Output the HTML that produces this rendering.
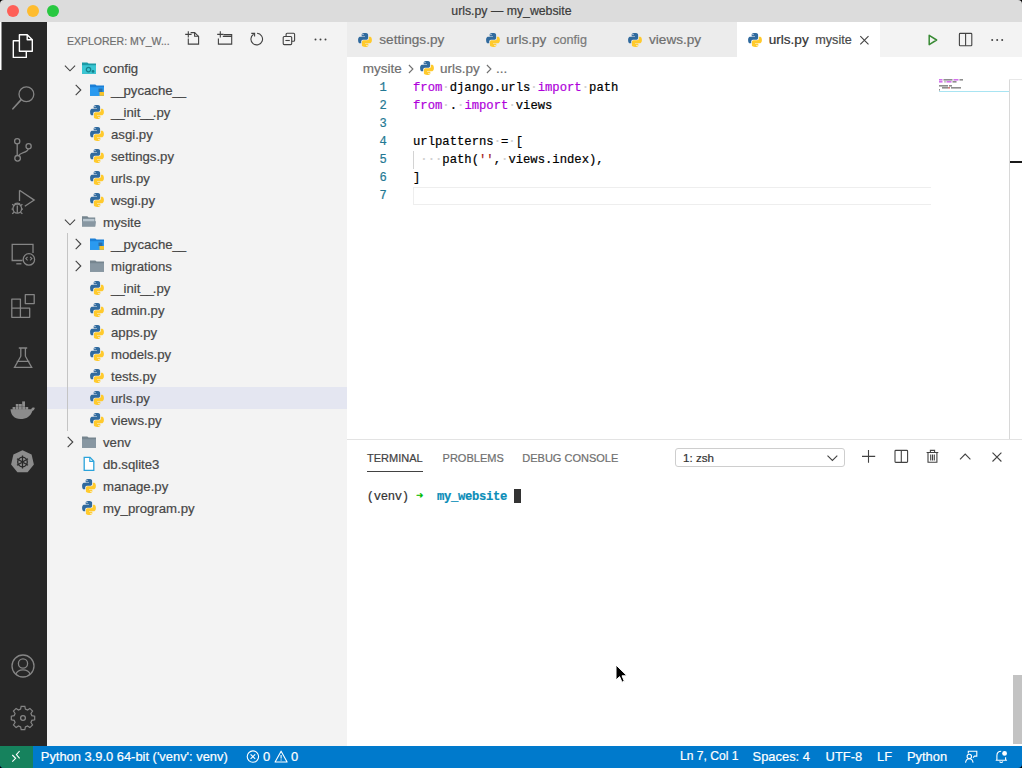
<!DOCTYPE html>
<html><head><meta charset="utf-8">
<style>
*{margin:0;padding:0;box-sizing:border-box}
html,body{width:1022px;height:768px;overflow:hidden;background:#fff;font-family:"Liberation Sans",sans-serif;}
.a{position:absolute}
.t{position:absolute;white-space:pre;-webkit-text-stroke:0.2px currentColor}
svg.a{overflow:visible}
</style></head><body>
<div class="a" style="left:0px;top:0px;width:1022px;height:22px;background:#000;"></div>
<div class="a" style="left:0px;top:0px;width:1022px;height:22px;background:#dcdcdc;border-radius:4px 4px 0 0;"></div>
<div class="a" style="left:0px;top:22px;width:47px;height:724px;background:#272727;"></div>
<div class="a" style="left:47px;top:22px;width:300px;height:724px;background:#f3f3f3;"></div>
<div class="a" style="left:347px;top:22px;width:675px;height:35px;background:#f3f3f3;"></div>
<div class="a" style="left:347px;top:22px;width:390px;height:35px;background:#ececec;"></div>
<div class="a" style="left:737px;top:22px;width:143px;height:35px;background:#ffffff;"></div>
<div class="a" style="left:347px;top:57px;width:675px;height:382px;background:#ffffff;"></div>
<div class="a" style="left:347px;top:439px;width:675px;height:307px;background:#ffffff;"></div>
<div class="a" style="left:347px;top:439px;width:675px;height:1px;background:#e3e3e3;"></div>
<div class="a" style="left:0px;top:746px;width:1022px;height:22px;background:#000;"></div>
<div class="a" style="left:0px;top:746px;width:1022px;height:22px;background:#007acc;border-radius:0 0 4px 4px;"></div>
<div class="a" style="left:0px;top:746px;width:33px;height:22px;background:#16825d;border-radius:0 0 0 4px;"></div>
<div class="a" style="left:6.9px;top:4.6px;width:12px;height:12px;border-radius:50%;background:#fe5f57;"></div>
<div class="a" style="left:26.9px;top:4.6px;width:12px;height:12px;border-radius:50%;background:#febc2e;"></div>
<div class="a" style="left:46.9px;top:4.6px;width:12px;height:12px;border-radius:50%;background:#28c840;"></div>
<div class="t" style="left:451.30px;top:2.14px;font-size:12.3px;line-height:18px;color:#3b3b3b;font-family:'Liberation Sans',sans-serif;">urls.py — my_website</div>
<svg class="a" style="left:0;top:0" width="47" height="768" viewBox="0 0 47 768">
<rect x="0" y="22" width="1.5" height="48" fill="#ffffff"/>
<g fill="none" stroke="#ffffff" stroke-width="1.4" stroke-linejoin="round">
<path d="M19.4 34.7H27.2L32.3 39.8V51.3H19.4Z"/>
<path d="M27.2 34.7V39.8H32.3"/>
<path d="M19.4 40.8H13.3V57.4H26.3V51.3"/>
</g>
<g fill="none" stroke="#858585" stroke-width="1.3">
<circle cx="26.4" cy="94.2" r="7.4"/>
<path d="M21.2 99.6L12.9 108.8" stroke-width="1.6" stroke-linecap="round"/>
<circle cx="17.2" cy="141.2" r="2.6"/>
<circle cx="28.6" cy="146.2" r="2.6"/>
<circle cx="17.6" cy="158.3" r="2.8"/>
<path d="M17.2 143.8V155.5"/>
<path d="M28.2 148.8C27.5 153 20 152.2 18.6 155.8"/>
<path d="M19.5 190.3V201M19.5 190.3L34.2 200.1L24.8 206.3"/>
<ellipse cx="17.3" cy="208.6" rx="4.3" ry="4.6"/>
<path d="M12.2 204.2L14.5 206M22.4 204.2L20.2 206M11.6 209.2H13M21.6 209.2H23M12.2 213.8L14.2 212.2M22.4 213.8L20.4 212.2M14.3 204.6C15 202.6 19.6 202.6 20.3 204.6M17.3 205.5V212.8"/>
<path d="M22.5 260.5H12.2V244.4H33V253"/>
<path d="M16.3 263.8H21.4"/>
<circle cx="28.9" cy="259.4" r="5.7"/>
<path d="M27.6 256.8L25.8 258.6L27.6 260.4M30.1 256.8L31.9 258.6L30.1 260.4" stroke-width="1.1"/>
<path d="M11.8 299.1H20.4V317.3H11.8ZM11.8 308.2H29.7V317.3H20.4M25.3 294.7H34.2V303.6H25.3Z" stroke-linejoin="round"/>
<path d="M18.8 348H27.2M20.8 348V356.2L14.5 367.4H31.7L25.4 356.2V348M16.7 361.4H29.4"/>
<circle cx="23" cy="666" r="11"/>
<circle cx="23" cy="663.5" r="4.6"/>
<path d="M15.8 674.3C18 668.5 28 668.5 30.2 674.3"/>
<circle cx="23" cy="718" r="2.4"/>
<path d="M21 707.3H25L25.6 710.4L27.9 711.4L30.5 709.6L33.4 712.5L31.6 715.1L32.6 717.4L35.7 718V722L32.6 722.6L31.6 724.9L33.4 727.5L30.5 730.4L27.9 728.6L25.6 729.6L25 732.7H21L20.4 729.6L18.1 728.6L15.5 730.4L12.6 727.5L14.4 724.9L13.4 722.6L10.3 722V718L13.4 717.4L14.4 715.1L12.6 712.5L15.5 709.6L18.1 711.4L20.4 710.4Z" transform="translate(23,718) scale(0.92) translate(-23,-720)"/>
</g>
<g fill="#8c8c8c">
<path d="M10.5 409.3H31.2C31.6 407.6 33.4 407 34.8 407.9C34.5 409.4 33.6 410.5 32.4 410.9C30.8 416 26.4 419 20.4 419C14.4 419 10.9 415.2 10.5 409.3Z"/>
<rect x="12.6" y="407" width="2.8" height="2.8"/><rect x="15.8" y="407" width="2.8" height="2.8"/><rect x="19" y="407" width="2.8" height="2.8"/><rect x="22.2" y="407" width="2.8" height="2.8"/><rect x="25.4" y="407" width="2.8" height="2.8"/>
<rect x="15.8" y="404" width="2.8" height="2.8"/><rect x="19" y="404" width="2.8" height="2.8"/><rect x="22.2" y="404" width="2.8" height="2.8"/>
<rect x="22.2" y="401.4" width="2.8" height="2.8"/>
<path d="M22.5 450.2L31.6 454.6L33.9 464.4L27.6 472.3H17.4L11.1 464.4L13.4 454.6Z"/>
</g>
<g fill="none" stroke="#272727" stroke-width="1.3">
<circle cx="22.5" cy="462" r="4.8"/>
<path d="M22.5 455.5V468.5M17 458.8L28 465.2M17 465.2L28 458.8"/>
</g>
</svg>
<div class="t" style="left:67.00px;top:32.96px;font-size:10.5px;line-height:16px;color:#6f6f6f;font-family:'Liberation Sans',sans-serif;">EXPLORER: MY_W...</div>
<svg class="a" style="left:0;top:0" width="347" height="60" viewBox="0 0 347 60">
<g fill="none" stroke="#424242" stroke-width="1.1">
<path d="M188.3 31.3V37.6M185.2 34.4H191.6"/>
<path d="M190.6 32.6H194.6L198.6 36.4V44.1H188.3V38.6"/>
<path d="M194.6 32.6V36.2H198.6"/>
<path d="M220.3 31.3V37.6M217.2 34.4H223.6"/>
<path d="M223.6 34.6H231.7V44.1H218.4V38.6M222.8 36.4H231.7"/>
<path d="M253.6 34.2A5.8 5.8 0 1 0 257.1 33.3"/>
<path d="M251.3 33.4H254.6V36.6"/>
<path d="M286.1 36.4V34.3Q286.1 33.3 287.1 33.3H293.6Q294.6 33.3 294.6 34.3V40.2Q294.6 41.2 293.6 41.2H291.7"/>
<rect x="283.2" y="36.5" width="8.5" height="8.1" rx="1"/>
<path d="M285.4 40.5H289.8"/>
</g>
<g fill="#424242"><circle cx="315.5" cy="39.5" r="1"/><circle cx="320.5" cy="39.5" r="1"/><circle cx="325.5" cy="39.5" r="1"/></g>
</svg>
<div class="a" style="left:47px;top:387px;width:300px;height:22px;background:#e4e6f1;"></div>
<div class="a" style="left:67px;top:233px;width:1px;height:198px;background:#c4c4c4;"></div>
<svg class="a" style="left:62px;top:60px" width="16" height="16" viewBox="0 0 16 16"><path d="M2.9 5.7L8 10.8l5.1-5.1" fill="none" stroke="#424242" stroke-width="1.1"/></svg>
<svg class="a" style="left:81px;top:60px" width="16" height="16" viewBox="0 0 16 16">
<path fill="#1a9aa6" d="M1 2.4H6.3L7.6 3.6H15V13.8H1Z"/>
<path fill="#3ac6d3" d="M1 5.2H15V13.8H1Z"/>
<circle cx="7.5" cy="9.6" r="2.2" fill="none" stroke="#15808c" stroke-width="1.2"/>
<circle cx="12" cy="11.4" r="1.4" fill="#15808c"/>
</svg>
<div class="t" style="left:103.00px;top:58.72px;font-size:13.2px;line-height:20px;color:#474747;font-family:'Liberation Sans',sans-serif;">config</div>
<svg class="a" style="left:70.1px;top:82px" width="16" height="16" viewBox="0 0 16 16"><path d="M5.7 2.9L10.8 8l-5.1 5.1" fill="none" stroke="#424242" stroke-width="1.1"/></svg>
<svg class="a" style="left:89px;top:82px" width="16" height="16" viewBox="0 0 16 16">
<path fill="#1b7fd6" d="M1 2.4H6.3L7.6 3.6H15V13.8H1Z"/>
<path fill="#2a9af0" d="M1 5.2H15V13.8H1Z"/>
<path fill="#2a6fa8" d="M9.5 6.5h4v3.5h-4z"/>
<path fill="#f6c22a" d="M10.5 10h4.5v3.8h-4.5z"/>
</svg>
<div class="t" style="left:111.00px;top:80.72px;font-size:13.2px;line-height:20px;color:#474747;font-family:'Liberation Sans',sans-serif;"><span style="letter-spacing:-1.1px">__</span>pycache<span style="letter-spacing:-1.1px">__</span></div>
<svg class="a" style="left:89px;top:104px" width="16" height="16" viewBox="0 0 16 16">
<path fill="#306a9e" d="M7.9 1.1c-3.4 0-3.2 1.5-3.2 1.5v1.6h3.3v.5H3.3S1.1 4.4 1.1 7.9s1.9 3.4 1.9 3.4h1.2V9.6s-.1-1.9 1.9-1.9h3.2s1.8 0 1.8-1.8V2.9s.3-1.8-3.2-1.8z"/>
<circle cx="6" cy="2.6" r=".6" fill="#fff"/>
<path fill="#ffca2c" transform="rotate(180 8 8)" d="M7.9 1.1c-3.4 0-3.2 1.5-3.2 1.5v1.6h3.3v.5H3.3S1.1 4.4 1.1 7.9s1.9 3.4 1.9 3.4h1.2V9.6s-.1-1.9 1.9-1.9h3.2s1.8 0 1.8-1.8V2.9s.3-1.8-3.2-1.8z"/>
<circle cx="10" cy="13.4" r=".6" fill="#fff"/>
</svg>
<div class="t" style="left:111.00px;top:102.72px;font-size:13.2px;line-height:20px;color:#474747;font-family:'Liberation Sans',sans-serif;"><span style="letter-spacing:-1.1px">__</span>init<span style="letter-spacing:-1.1px">__</span>.py</div>
<svg class="a" style="left:89px;top:126px" width="16" height="16" viewBox="0 0 16 16">
<path fill="#306a9e" d="M7.9 1.1c-3.4 0-3.2 1.5-3.2 1.5v1.6h3.3v.5H3.3S1.1 4.4 1.1 7.9s1.9 3.4 1.9 3.4h1.2V9.6s-.1-1.9 1.9-1.9h3.2s1.8 0 1.8-1.8V2.9s.3-1.8-3.2-1.8z"/>
<circle cx="6" cy="2.6" r=".6" fill="#fff"/>
<path fill="#ffca2c" transform="rotate(180 8 8)" d="M7.9 1.1c-3.4 0-3.2 1.5-3.2 1.5v1.6h3.3v.5H3.3S1.1 4.4 1.1 7.9s1.9 3.4 1.9 3.4h1.2V9.6s-.1-1.9 1.9-1.9h3.2s1.8 0 1.8-1.8V2.9s.3-1.8-3.2-1.8z"/>
<circle cx="10" cy="13.4" r=".6" fill="#fff"/>
</svg>
<div class="t" style="left:111.00px;top:124.72px;font-size:13.2px;line-height:20px;color:#474747;font-family:'Liberation Sans',sans-serif;">asgi.py</div>
<svg class="a" style="left:89px;top:148px" width="16" height="16" viewBox="0 0 16 16">
<path fill="#306a9e" d="M7.9 1.1c-3.4 0-3.2 1.5-3.2 1.5v1.6h3.3v.5H3.3S1.1 4.4 1.1 7.9s1.9 3.4 1.9 3.4h1.2V9.6s-.1-1.9 1.9-1.9h3.2s1.8 0 1.8-1.8V2.9s.3-1.8-3.2-1.8z"/>
<circle cx="6" cy="2.6" r=".6" fill="#fff"/>
<path fill="#ffca2c" transform="rotate(180 8 8)" d="M7.9 1.1c-3.4 0-3.2 1.5-3.2 1.5v1.6h3.3v.5H3.3S1.1 4.4 1.1 7.9s1.9 3.4 1.9 3.4h1.2V9.6s-.1-1.9 1.9-1.9h3.2s1.8 0 1.8-1.8V2.9s.3-1.8-3.2-1.8z"/>
<circle cx="10" cy="13.4" r=".6" fill="#fff"/>
</svg>
<div class="t" style="left:111.00px;top:146.72px;font-size:13.2px;line-height:20px;color:#474747;font-family:'Liberation Sans',sans-serif;">settings.py</div>
<svg class="a" style="left:89px;top:170px" width="16" height="16" viewBox="0 0 16 16">
<path fill="#306a9e" d="M7.9 1.1c-3.4 0-3.2 1.5-3.2 1.5v1.6h3.3v.5H3.3S1.1 4.4 1.1 7.9s1.9 3.4 1.9 3.4h1.2V9.6s-.1-1.9 1.9-1.9h3.2s1.8 0 1.8-1.8V2.9s.3-1.8-3.2-1.8z"/>
<circle cx="6" cy="2.6" r=".6" fill="#fff"/>
<path fill="#ffca2c" transform="rotate(180 8 8)" d="M7.9 1.1c-3.4 0-3.2 1.5-3.2 1.5v1.6h3.3v.5H3.3S1.1 4.4 1.1 7.9s1.9 3.4 1.9 3.4h1.2V9.6s-.1-1.9 1.9-1.9h3.2s1.8 0 1.8-1.8V2.9s.3-1.8-3.2-1.8z"/>
<circle cx="10" cy="13.4" r=".6" fill="#fff"/>
</svg>
<div class="t" style="left:111.00px;top:168.72px;font-size:13.2px;line-height:20px;color:#474747;font-family:'Liberation Sans',sans-serif;">urls.py</div>
<svg class="a" style="left:89px;top:192px" width="16" height="16" viewBox="0 0 16 16">
<path fill="#306a9e" d="M7.9 1.1c-3.4 0-3.2 1.5-3.2 1.5v1.6h3.3v.5H3.3S1.1 4.4 1.1 7.9s1.9 3.4 1.9 3.4h1.2V9.6s-.1-1.9 1.9-1.9h3.2s1.8 0 1.8-1.8V2.9s.3-1.8-3.2-1.8z"/>
<circle cx="6" cy="2.6" r=".6" fill="#fff"/>
<path fill="#ffca2c" transform="rotate(180 8 8)" d="M7.9 1.1c-3.4 0-3.2 1.5-3.2 1.5v1.6h3.3v.5H3.3S1.1 4.4 1.1 7.9s1.9 3.4 1.9 3.4h1.2V9.6s-.1-1.9 1.9-1.9h3.2s1.8 0 1.8-1.8V2.9s.3-1.8-3.2-1.8z"/>
<circle cx="10" cy="13.4" r=".6" fill="#fff"/>
</svg>
<div class="t" style="left:111.00px;top:190.72px;font-size:13.2px;line-height:20px;color:#474747;font-family:'Liberation Sans',sans-serif;">wsgi.py</div>
<svg class="a" style="left:62px;top:214px" width="16" height="16" viewBox="0 0 16 16"><path d="M2.9 5.7L8 10.8l5.1-5.1" fill="none" stroke="#424242" stroke-width="1.1"/></svg>
<svg class="a" style="left:81px;top:214px" width="16" height="16" viewBox="0 0 16 16">
<path fill="#76858f" d="M1 2.2H6.3L7.6 3.4H14.2V12.6H1Z"/>
<path fill="#b9c6cf" d="M2 4.8H13.5V8H2Z"/>
<path fill="#8897a2" d="M1 7.2H15L14.2 12.6H1Z"/>
</svg>
<div class="t" style="left:103.00px;top:212.72px;font-size:13.2px;line-height:20px;color:#474747;font-family:'Liberation Sans',sans-serif;">mysite</div>
<svg class="a" style="left:70.1px;top:236px" width="16" height="16" viewBox="0 0 16 16"><path d="M5.7 2.9L10.8 8l-5.1 5.1" fill="none" stroke="#424242" stroke-width="1.1"/></svg>
<svg class="a" style="left:89px;top:236px" width="16" height="16" viewBox="0 0 16 16">
<path fill="#1b7fd6" d="M1 2.4H6.3L7.6 3.6H15V13.8H1Z"/>
<path fill="#2a9af0" d="M1 5.2H15V13.8H1Z"/>
<path fill="#2a6fa8" d="M9.5 6.5h4v3.5h-4z"/>
<path fill="#f6c22a" d="M10.5 10h4.5v3.8h-4.5z"/>
</svg>
<div class="t" style="left:111.00px;top:234.72px;font-size:13.2px;line-height:20px;color:#474747;font-family:'Liberation Sans',sans-serif;"><span style="letter-spacing:-1.1px">__</span>pycache<span style="letter-spacing:-1.1px">__</span></div>
<svg class="a" style="left:70.1px;top:258px" width="16" height="16" viewBox="0 0 16 16"><path d="M5.7 2.9L10.8 8l-5.1 5.1" fill="none" stroke="#424242" stroke-width="1.1"/></svg>
<svg class="a" style="left:89px;top:258px" width="16" height="16" viewBox="0 0 16 16">
<path fill="#76858f" d="M1 2.4H6.3L7.6 3.6H15V13.8H1Z"/>
<path fill="#8897a2" d="M1 5.2H15V13.8H1Z"/>
</svg>
<div class="t" style="left:111.00px;top:256.72px;font-size:13.2px;line-height:20px;color:#474747;font-family:'Liberation Sans',sans-serif;">migrations</div>
<svg class="a" style="left:89px;top:280px" width="16" height="16" viewBox="0 0 16 16">
<path fill="#306a9e" d="M7.9 1.1c-3.4 0-3.2 1.5-3.2 1.5v1.6h3.3v.5H3.3S1.1 4.4 1.1 7.9s1.9 3.4 1.9 3.4h1.2V9.6s-.1-1.9 1.9-1.9h3.2s1.8 0 1.8-1.8V2.9s.3-1.8-3.2-1.8z"/>
<circle cx="6" cy="2.6" r=".6" fill="#fff"/>
<path fill="#ffca2c" transform="rotate(180 8 8)" d="M7.9 1.1c-3.4 0-3.2 1.5-3.2 1.5v1.6h3.3v.5H3.3S1.1 4.4 1.1 7.9s1.9 3.4 1.9 3.4h1.2V9.6s-.1-1.9 1.9-1.9h3.2s1.8 0 1.8-1.8V2.9s.3-1.8-3.2-1.8z"/>
<circle cx="10" cy="13.4" r=".6" fill="#fff"/>
</svg>
<div class="t" style="left:111.00px;top:278.72px;font-size:13.2px;line-height:20px;color:#474747;font-family:'Liberation Sans',sans-serif;"><span style="letter-spacing:-1.1px">__</span>init<span style="letter-spacing:-1.1px">__</span>.py</div>
<svg class="a" style="left:89px;top:302px" width="16" height="16" viewBox="0 0 16 16">
<path fill="#306a9e" d="M7.9 1.1c-3.4 0-3.2 1.5-3.2 1.5v1.6h3.3v.5H3.3S1.1 4.4 1.1 7.9s1.9 3.4 1.9 3.4h1.2V9.6s-.1-1.9 1.9-1.9h3.2s1.8 0 1.8-1.8V2.9s.3-1.8-3.2-1.8z"/>
<circle cx="6" cy="2.6" r=".6" fill="#fff"/>
<path fill="#ffca2c" transform="rotate(180 8 8)" d="M7.9 1.1c-3.4 0-3.2 1.5-3.2 1.5v1.6h3.3v.5H3.3S1.1 4.4 1.1 7.9s1.9 3.4 1.9 3.4h1.2V9.6s-.1-1.9 1.9-1.9h3.2s1.8 0 1.8-1.8V2.9s.3-1.8-3.2-1.8z"/>
<circle cx="10" cy="13.4" r=".6" fill="#fff"/>
</svg>
<div class="t" style="left:111.00px;top:300.72px;font-size:13.2px;line-height:20px;color:#474747;font-family:'Liberation Sans',sans-serif;">admin.py</div>
<svg class="a" style="left:89px;top:324px" width="16" height="16" viewBox="0 0 16 16">
<path fill="#306a9e" d="M7.9 1.1c-3.4 0-3.2 1.5-3.2 1.5v1.6h3.3v.5H3.3S1.1 4.4 1.1 7.9s1.9 3.4 1.9 3.4h1.2V9.6s-.1-1.9 1.9-1.9h3.2s1.8 0 1.8-1.8V2.9s.3-1.8-3.2-1.8z"/>
<circle cx="6" cy="2.6" r=".6" fill="#fff"/>
<path fill="#ffca2c" transform="rotate(180 8 8)" d="M7.9 1.1c-3.4 0-3.2 1.5-3.2 1.5v1.6h3.3v.5H3.3S1.1 4.4 1.1 7.9s1.9 3.4 1.9 3.4h1.2V9.6s-.1-1.9 1.9-1.9h3.2s1.8 0 1.8-1.8V2.9s.3-1.8-3.2-1.8z"/>
<circle cx="10" cy="13.4" r=".6" fill="#fff"/>
</svg>
<div class="t" style="left:111.00px;top:322.72px;font-size:13.2px;line-height:20px;color:#474747;font-family:'Liberation Sans',sans-serif;">apps.py</div>
<svg class="a" style="left:89px;top:346px" width="16" height="16" viewBox="0 0 16 16">
<path fill="#306a9e" d="M7.9 1.1c-3.4 0-3.2 1.5-3.2 1.5v1.6h3.3v.5H3.3S1.1 4.4 1.1 7.9s1.9 3.4 1.9 3.4h1.2V9.6s-.1-1.9 1.9-1.9h3.2s1.8 0 1.8-1.8V2.9s.3-1.8-3.2-1.8z"/>
<circle cx="6" cy="2.6" r=".6" fill="#fff"/>
<path fill="#ffca2c" transform="rotate(180 8 8)" d="M7.9 1.1c-3.4 0-3.2 1.5-3.2 1.5v1.6h3.3v.5H3.3S1.1 4.4 1.1 7.9s1.9 3.4 1.9 3.4h1.2V9.6s-.1-1.9 1.9-1.9h3.2s1.8 0 1.8-1.8V2.9s.3-1.8-3.2-1.8z"/>
<circle cx="10" cy="13.4" r=".6" fill="#fff"/>
</svg>
<div class="t" style="left:111.00px;top:344.72px;font-size:13.2px;line-height:20px;color:#474747;font-family:'Liberation Sans',sans-serif;">models.py</div>
<svg class="a" style="left:89px;top:368px" width="16" height="16" viewBox="0 0 16 16">
<path fill="#306a9e" d="M7.9 1.1c-3.4 0-3.2 1.5-3.2 1.5v1.6h3.3v.5H3.3S1.1 4.4 1.1 7.9s1.9 3.4 1.9 3.4h1.2V9.6s-.1-1.9 1.9-1.9h3.2s1.8 0 1.8-1.8V2.9s.3-1.8-3.2-1.8z"/>
<circle cx="6" cy="2.6" r=".6" fill="#fff"/>
<path fill="#ffca2c" transform="rotate(180 8 8)" d="M7.9 1.1c-3.4 0-3.2 1.5-3.2 1.5v1.6h3.3v.5H3.3S1.1 4.4 1.1 7.9s1.9 3.4 1.9 3.4h1.2V9.6s-.1-1.9 1.9-1.9h3.2s1.8 0 1.8-1.8V2.9s.3-1.8-3.2-1.8z"/>
<circle cx="10" cy="13.4" r=".6" fill="#fff"/>
</svg>
<div class="t" style="left:111.00px;top:366.72px;font-size:13.2px;line-height:20px;color:#474747;font-family:'Liberation Sans',sans-serif;">tests.py</div>
<svg class="a" style="left:89px;top:390px" width="16" height="16" viewBox="0 0 16 16">
<path fill="#306a9e" d="M7.9 1.1c-3.4 0-3.2 1.5-3.2 1.5v1.6h3.3v.5H3.3S1.1 4.4 1.1 7.9s1.9 3.4 1.9 3.4h1.2V9.6s-.1-1.9 1.9-1.9h3.2s1.8 0 1.8-1.8V2.9s.3-1.8-3.2-1.8z"/>
<circle cx="6" cy="2.6" r=".6" fill="#fff"/>
<path fill="#ffca2c" transform="rotate(180 8 8)" d="M7.9 1.1c-3.4 0-3.2 1.5-3.2 1.5v1.6h3.3v.5H3.3S1.1 4.4 1.1 7.9s1.9 3.4 1.9 3.4h1.2V9.6s-.1-1.9 1.9-1.9h3.2s1.8 0 1.8-1.8V2.9s.3-1.8-3.2-1.8z"/>
<circle cx="10" cy="13.4" r=".6" fill="#fff"/>
</svg>
<div class="t" style="left:111.00px;top:388.72px;font-size:13.2px;line-height:20px;color:#474747;font-family:'Liberation Sans',sans-serif;">urls.py</div>
<svg class="a" style="left:89px;top:412px" width="16" height="16" viewBox="0 0 16 16">
<path fill="#306a9e" d="M7.9 1.1c-3.4 0-3.2 1.5-3.2 1.5v1.6h3.3v.5H3.3S1.1 4.4 1.1 7.9s1.9 3.4 1.9 3.4h1.2V9.6s-.1-1.9 1.9-1.9h3.2s1.8 0 1.8-1.8V2.9s.3-1.8-3.2-1.8z"/>
<circle cx="6" cy="2.6" r=".6" fill="#fff"/>
<path fill="#ffca2c" transform="rotate(180 8 8)" d="M7.9 1.1c-3.4 0-3.2 1.5-3.2 1.5v1.6h3.3v.5H3.3S1.1 4.4 1.1 7.9s1.9 3.4 1.9 3.4h1.2V9.6s-.1-1.9 1.9-1.9h3.2s1.8 0 1.8-1.8V2.9s.3-1.8-3.2-1.8z"/>
<circle cx="10" cy="13.4" r=".6" fill="#fff"/>
</svg>
<div class="t" style="left:111.00px;top:410.72px;font-size:13.2px;line-height:20px;color:#474747;font-family:'Liberation Sans',sans-serif;">views.py</div>
<svg class="a" style="left:62.1px;top:434px" width="16" height="16" viewBox="0 0 16 16"><path d="M5.7 2.9L10.8 8l-5.1 5.1" fill="none" stroke="#424242" stroke-width="1.1"/></svg>
<svg class="a" style="left:81px;top:434px" width="16" height="16" viewBox="0 0 16 16">
<path fill="#76858f" d="M1 2.4H6.3L7.6 3.6H15V13.8H1Z"/>
<path fill="#8897a2" d="M1 5.2H15V13.8H1Z"/>
</svg>
<div class="t" style="left:103.00px;top:432.72px;font-size:13.2px;line-height:20px;color:#474747;font-family:'Liberation Sans',sans-serif;">venv</div>
<svg class="a" style="left:81px;top:456px" width="16" height="16" viewBox="0 0 16 16">
<path fill="#fff" stroke="#2aa3db" stroke-width="1.3" d="M3.2 1.4H9L12.8 5.2V14.3H3.2Z"/>
<path fill="none" stroke="#2aa3db" stroke-width="1.1" d="M8.8 1.6V5.4H12.6"/>
</svg>
<div class="t" style="left:103.00px;top:454.72px;font-size:13.2px;line-height:20px;color:#474747;font-family:'Liberation Sans',sans-serif;">db.sqlite3</div>
<svg class="a" style="left:81px;top:478px" width="16" height="16" viewBox="0 0 16 16">
<path fill="#306a9e" d="M7.9 1.1c-3.4 0-3.2 1.5-3.2 1.5v1.6h3.3v.5H3.3S1.1 4.4 1.1 7.9s1.9 3.4 1.9 3.4h1.2V9.6s-.1-1.9 1.9-1.9h3.2s1.8 0 1.8-1.8V2.9s.3-1.8-3.2-1.8z"/>
<circle cx="6" cy="2.6" r=".6" fill="#fff"/>
<path fill="#ffca2c" transform="rotate(180 8 8)" d="M7.9 1.1c-3.4 0-3.2 1.5-3.2 1.5v1.6h3.3v.5H3.3S1.1 4.4 1.1 7.9s1.9 3.4 1.9 3.4h1.2V9.6s-.1-1.9 1.9-1.9h3.2s1.8 0 1.8-1.8V2.9s.3-1.8-3.2-1.8z"/>
<circle cx="10" cy="13.4" r=".6" fill="#fff"/>
</svg>
<div class="t" style="left:103.00px;top:476.72px;font-size:13.2px;line-height:20px;color:#474747;font-family:'Liberation Sans',sans-serif;">manage.py</div>
<svg class="a" style="left:81px;top:500px" width="16" height="16" viewBox="0 0 16 16">
<path fill="#306a9e" d="M7.9 1.1c-3.4 0-3.2 1.5-3.2 1.5v1.6h3.3v.5H3.3S1.1 4.4 1.1 7.9s1.9 3.4 1.9 3.4h1.2V9.6s-.1-1.9 1.9-1.9h3.2s1.8 0 1.8-1.8V2.9s.3-1.8-3.2-1.8z"/>
<circle cx="6" cy="2.6" r=".6" fill="#fff"/>
<path fill="#ffca2c" transform="rotate(180 8 8)" d="M7.9 1.1c-3.4 0-3.2 1.5-3.2 1.5v1.6h3.3v.5H3.3S1.1 4.4 1.1 7.9s1.9 3.4 1.9 3.4h1.2V9.6s-.1-1.9 1.9-1.9h3.2s1.8 0 1.8-1.8V2.9s.3-1.8-3.2-1.8z"/>
<circle cx="10" cy="13.4" r=".6" fill="#fff"/>
</svg>
<div class="t" style="left:103.00px;top:498.72px;font-size:13.2px;line-height:20px;color:#474747;font-family:'Liberation Sans',sans-serif;">my_program.py</div>
<svg class="a" style="left:357px;top:32px" width="16" height="16" viewBox="0 0 16 16">
<path fill="#306a9e" d="M7.9 1.1c-3.4 0-3.2 1.5-3.2 1.5v1.6h3.3v.5H3.3S1.1 4.4 1.1 7.9s1.9 3.4 1.9 3.4h1.2V9.6s-.1-1.9 1.9-1.9h3.2s1.8 0 1.8-1.8V2.9s.3-1.8-3.2-1.8z"/>
<circle cx="6" cy="2.6" r=".6" fill="#fff"/>
<path fill="#ffca2c" transform="rotate(180 8 8)" d="M7.9 1.1c-3.4 0-3.2 1.5-3.2 1.5v1.6h3.3v.5H3.3S1.1 4.4 1.1 7.9s1.9 3.4 1.9 3.4h1.2V9.6s-.1-1.9 1.9-1.9h3.2s1.8 0 1.8-1.8V2.9s.3-1.8-3.2-1.8z"/>
<circle cx="10" cy="13.4" r=".6" fill="#fff"/>
</svg>
<div class="t" style="left:379.30px;top:29.68px;font-size:13.6px;line-height:20px;color:#6e6e6e;font-family:'Liberation Sans',sans-serif;">settings.py</div>
<svg class="a" style="left:485px;top:32px" width="16" height="16" viewBox="0 0 16 16">
<path fill="#306a9e" d="M7.9 1.1c-3.4 0-3.2 1.5-3.2 1.5v1.6h3.3v.5H3.3S1.1 4.4 1.1 7.9s1.9 3.4 1.9 3.4h1.2V9.6s-.1-1.9 1.9-1.9h3.2s1.8 0 1.8-1.8V2.9s.3-1.8-3.2-1.8z"/>
<circle cx="6" cy="2.6" r=".6" fill="#fff"/>
<path fill="#ffca2c" transform="rotate(180 8 8)" d="M7.9 1.1c-3.4 0-3.2 1.5-3.2 1.5v1.6h3.3v.5H3.3S1.1 4.4 1.1 7.9s1.9 3.4 1.9 3.4h1.2V9.6s-.1-1.9 1.9-1.9h3.2s1.8 0 1.8-1.8V2.9s.3-1.8-3.2-1.8z"/>
<circle cx="10" cy="13.4" r=".6" fill="#fff"/>
</svg>
<div class="t" style="left:506.30px;top:29.68px;font-size:13.6px;line-height:20px;color:#6e6e6e;font-family:'Liberation Sans',sans-serif;">urls.py</div>
<div class="t" style="left:553.30px;top:30.53px;font-size:12.6px;line-height:19px;color:#7a7a7a;font-family:'Liberation Sans',sans-serif;">config</div>
<svg class="a" style="left:627px;top:32px" width="16" height="16" viewBox="0 0 16 16">
<path fill="#306a9e" d="M7.9 1.1c-3.4 0-3.2 1.5-3.2 1.5v1.6h3.3v.5H3.3S1.1 4.4 1.1 7.9s1.9 3.4 1.9 3.4h1.2V9.6s-.1-1.9 1.9-1.9h3.2s1.8 0 1.8-1.8V2.9s.3-1.8-3.2-1.8z"/>
<circle cx="6" cy="2.6" r=".6" fill="#fff"/>
<path fill="#ffca2c" transform="rotate(180 8 8)" d="M7.9 1.1c-3.4 0-3.2 1.5-3.2 1.5v1.6h3.3v.5H3.3S1.1 4.4 1.1 7.9s1.9 3.4 1.9 3.4h1.2V9.6s-.1-1.9 1.9-1.9h3.2s1.8 0 1.8-1.8V2.9s.3-1.8-3.2-1.8z"/>
<circle cx="10" cy="13.4" r=".6" fill="#fff"/>
</svg>
<div class="t" style="left:649.00px;top:29.68px;font-size:13.6px;line-height:20px;color:#6e6e6e;font-family:'Liberation Sans',sans-serif;">views.py</div>
<svg class="a" style="left:747px;top:32px" width="16" height="16" viewBox="0 0 16 16">
<path fill="#306a9e" d="M7.9 1.1c-3.4 0-3.2 1.5-3.2 1.5v1.6h3.3v.5H3.3S1.1 4.4 1.1 7.9s1.9 3.4 1.9 3.4h1.2V9.6s-.1-1.9 1.9-1.9h3.2s1.8 0 1.8-1.8V2.9s.3-1.8-3.2-1.8z"/>
<circle cx="6" cy="2.6" r=".6" fill="#fff"/>
<path fill="#ffca2c" transform="rotate(180 8 8)" d="M7.9 1.1c-3.4 0-3.2 1.5-3.2 1.5v1.6h3.3v.5H3.3S1.1 4.4 1.1 7.9s1.9 3.4 1.9 3.4h1.2V9.6s-.1-1.9 1.9-1.9h3.2s1.8 0 1.8-1.8V2.9s.3-1.8-3.2-1.8z"/>
<circle cx="10" cy="13.4" r=".6" fill="#fff"/>
</svg>
<div class="t" style="left:768.70px;top:29.68px;font-size:13.6px;line-height:20px;color:#333333;font-family:'Liberation Sans',sans-serif;">urls.py</div>
<div class="t" style="left:815.30px;top:30.53px;font-size:12.6px;line-height:19px;color:#4a4a4a;font-family:'Liberation Sans',sans-serif;">mysite</div>
<svg class="a" style="left:0;top:0" width="1022" height="60" viewBox="0 0 1022 60">
<g fill="none" stroke="#424242" stroke-width="1.1">
<path d="M860.3 36.2L868.5 44.4M868.5 36.2L860.3 44.4"/>
<rect x="959.4" y="33.4" width="12.4" height="12.4" rx="0.8"/>
<path d="M965.6 33.4V45.8"/>
</g>
<path d="M929.2 35.3L936.6 40L929.2 44.7Z" fill="none" stroke="#388a34" stroke-width="1.5" stroke-linejoin="round"/>
<g fill="#424242"><circle cx="992.2" cy="40" r="1"/><circle cx="997.2" cy="40" r="1"/><circle cx="1002.2" cy="40" r="1"/></g>
</svg>
<div class="t" style="left:362.80px;top:58.92px;font-size:13.5px;line-height:20px;color:#6f6f6f;font-family:'Liberation Sans',sans-serif;">mysite</div>
<svg class="a" style="left:402.6px;top:61px" width="16" height="16" viewBox="0 0 16 16"><path d="M5.9 4L9.9 8l-4 4" fill="none" stroke="#6f6f6f" stroke-width="1.1"/></svg>
<svg class="a" style="left:419px;top:60px" width="16" height="16" viewBox="0 0 16 16">
<path fill="#306a9e" d="M7.9 1.1c-3.4 0-3.2 1.5-3.2 1.5v1.6h3.3v.5H3.3S1.1 4.4 1.1 7.9s1.9 3.4 1.9 3.4h1.2V9.6s-.1-1.9 1.9-1.9h3.2s1.8 0 1.8-1.8V2.9s.3-1.8-3.2-1.8z"/>
<circle cx="6" cy="2.6" r=".6" fill="#fff"/>
<path fill="#ffca2c" transform="rotate(180 8 8)" d="M7.9 1.1c-3.4 0-3.2 1.5-3.2 1.5v1.6h3.3v.5H3.3S1.1 4.4 1.1 7.9s1.9 3.4 1.9 3.4h1.2V9.6s-.1-1.9 1.9-1.9h3.2s1.8 0 1.8-1.8V2.9s.3-1.8-3.2-1.8z"/>
<circle cx="10" cy="13.4" r=".6" fill="#fff"/>
</svg>
<div class="t" style="left:440.00px;top:58.92px;font-size:13.5px;line-height:20px;color:#6f6f6f;font-family:'Liberation Sans',sans-serif;">urls.py</div>
<svg class="a" style="left:480.9px;top:61px" width="16" height="16" viewBox="0 0 16 16"><path d="M5.9 4L9.9 8l-4 4" fill="none" stroke="#6f6f6f" stroke-width="1.1"/></svg>
<div class="t" style="left:496.00px;top:58.92px;font-size:13.5px;line-height:20px;color:#6f6f6f;font-family:'Liberation Sans',sans-serif;">...</div>
<div class="a" style="left:413px;top:187px;width:518px;height:18px;background:#ffffff;border:1px solid #eeeeee;border-right:none;"></div>
<div class="t" style="left:379.60px;top:79.09px;font-size:12.08px;line-height:18px;color:#237893;font-family:'Liberation Mono',monospace;">1</div>
<div class="t" style="left:413.00px;top:79.05px;font-size:12.22px;line-height:18px;color:#000;font-family:'Liberation Mono',monospace;"><span style="color:#af00db">from</span><span style="color:#cfcfcf">·</span><span style="color:#000000">django.urls</span><span style="color:#cfcfcf">·</span><span style="color:#af00db">import</span><span style="color:#cfcfcf">·</span><span style="color:#000000">path</span></div>
<div class="t" style="left:379.60px;top:97.09px;font-size:12.08px;line-height:18px;color:#237893;font-family:'Liberation Mono',monospace;">2</div>
<div class="t" style="left:413.00px;top:97.05px;font-size:12.22px;line-height:18px;color:#000;font-family:'Liberation Mono',monospace;"><span style="color:#af00db">from</span><span style="color:#cfcfcf">·</span><span style="color:#000000">.</span><span style="color:#cfcfcf">·</span><span style="color:#af00db">import</span><span style="color:#cfcfcf">·</span><span style="color:#000000">views</span></div>
<div class="t" style="left:379.60px;top:115.09px;font-size:12.08px;line-height:18px;color:#237893;font-family:'Liberation Mono',monospace;">3</div>
<div class="t" style="left:413.00px;top:115.05px;font-size:12.22px;line-height:18px;color:#000;font-family:'Liberation Mono',monospace;"></div>
<div class="t" style="left:379.60px;top:133.09px;font-size:12.08px;line-height:18px;color:#237893;font-family:'Liberation Mono',monospace;">4</div>
<div class="t" style="left:413.00px;top:133.05px;font-size:12.22px;line-height:18px;color:#000;font-family:'Liberation Mono',monospace;"><span style="color:#000000">urlpatterns</span><span style="color:#cfcfcf">·</span><span style="color:#000000">=</span><span style="color:#cfcfcf">·</span><span style="color:#000000">[</span></div>
<div class="t" style="left:379.60px;top:151.09px;font-size:12.08px;line-height:18px;color:#237893;font-family:'Liberation Mono',monospace;">5</div>
<div class="t" style="left:413.00px;top:151.05px;font-size:12.22px;line-height:18px;color:#000;font-family:'Liberation Mono',monospace;"><span style="color:#cfcfcf"> ···</span><span style="color:#000000">path(</span><span style="color:#a31515">''</span><span style="color:#000000">,</span><span style="color:#cfcfcf">·</span><span style="color:#000000">views.index),</span></div>
<div class="t" style="left:379.60px;top:169.09px;font-size:12.08px;line-height:18px;color:#237893;font-family:'Liberation Mono',monospace;">6</div>
<div class="t" style="left:413.00px;top:169.05px;font-size:12.22px;line-height:18px;color:#000;font-family:'Liberation Mono',monospace;"><span style="color:#000000">]</span></div>
<div class="t" style="left:379.60px;top:187.09px;font-size:12.08px;line-height:18px;color:#237893;font-family:'Liberation Mono',monospace;">7</div>
<div class="t" style="left:413.00px;top:187.05px;font-size:12.22px;line-height:18px;color:#000;font-family:'Liberation Mono',monospace;"></div>
<div class="a" style="left:413px;top:151px;width:1px;height:18px;background:#d3d3d3;"></div>
<svg class="a" style="left:0;top:0" width="1022" height="440" viewBox="0 0 1022 440">
<g opacity="0.55">
<rect x="939" y="79" width="3.5" height="1.6" fill="#af00db"/><rect x="943.5" y="79" width="9" height="1.6" fill="#333"/><rect x="953.5" y="79" width="5" height="1.6" fill="#af00db"/><rect x="959.5" y="79" width="3.5" height="1.6" fill="#333"/>
<rect x="939" y="81" width="3.5" height="1.6" fill="#af00db"/><rect x="944.5" y="81" width="1" height="1.6" fill="#333"/><rect x="946.5" y="81" width="5" height="1.6" fill="#af00db"/><rect x="952.5" y="81" width="4" height="1.6" fill="#333"/>
<rect x="939" y="85" width="9" height="1.6" fill="#333"/><rect x="949" y="85" width="3" height="1.6" fill="#333"/>
<rect x="942" y="87" width="6" height="1.6" fill="#333"/><rect x="948" y="87" width="2" height="1.6" fill="#a31515"/><rect x="951" y="87" width="10" height="1.6" fill="#333"/>
<rect x="939" y="89" width="1" height="1.6" fill="#333"/>
</g>
<rect x="939" y="91" width="70" height="1" fill="#a8e4f2"/>
<rect x="1009" y="79" width="1" height="360" fill="#d8d8d8"/>
<rect x="1009" y="79" width="13" height="1" fill="#e8e8e8"/>
<rect x="1010" y="161" width="12" height="2" fill="#1a1a1a"/>
</svg>
<div class="t" style="left:367.00px;top:450.39px;font-size:11px;line-height:16px;color:#424242;font-family:'Liberation Sans',sans-serif;">TERMINAL</div>
<div class="a" style="left:367px;top:471px;width:56px;height:1px;background:#424242;"></div>
<div class="t" style="left:442.60px;top:450.39px;font-size:11px;line-height:16px;color:#6f6f6f;font-family:'Liberation Sans',sans-serif;">PROBLEMS</div>
<div class="t" style="left:522.30px;top:450.39px;font-size:11px;line-height:16px;color:#6f6f6f;font-family:'Liberation Sans',sans-serif;">DEBUG CONSOLE</div>
<div class="a" style="left:675px;top:448px;width:170px;height:19px;border:1px solid #cecece;border-radius:3px;background:#fff"></div>
<div class="t" style="left:683.00px;top:449.28px;font-size:11.6px;line-height:17px;color:#333333;font-family:'Liberation Sans',sans-serif;">1: zsh</div>
<svg class="a" style="left:0;top:0" width="1022" height="480" viewBox="0 0 1022 480">
<g fill="none" stroke="#424242" stroke-width="1.1">
<path d="M827.5 455.6L832.4 460.5L837.3 455.6"/>
<path d="M868.5 450V462.7M862 456.4H875.2"/>
<rect x="895" y="450.4" width="12.6" height="12" rx="0.8"/>
<path d="M901.3 450.4V462.4"/>
<path d="M926.6 452.5H938.3M930.4 452.4V450.4H934.6V452.4M928 452.6V462.3H936.9V452.6M930.7 454.6V460.6M932.5 454.6V460.6M934.3 454.6V460.6"/>
<path d="M960 459.4L965.2 454L970.4 459.4"/>
<path d="M992.5 452.6L1001.4 461.5M1001.4 452.6L992.5 461.5"/>
</g>
</svg>
<div class="t" style="left:366.80px;top:487.55px;font-size:12.2px;line-height:18px;color:#333333;font-family:'Liberation Mono',monospace;letter-spacing:-0.32px;">(venv) </div>
<div class="t" style="left:416.00px;top:487.49px;font-size:11.67px;line-height:18px;color:#00bc00;font-weight:700;font-family:'Liberation Mono',monospace;">➜</div>
<div class="t" style="left:437.00px;top:487.55px;font-size:12.2px;line-height:18px;color:#0a8db8;font-weight:700;font-family:'Liberation Mono',monospace;letter-spacing:-0.32px;">my_website</div>
<div class="a" style="left:514px;top:489px;width:7px;height:14px;background:#333333;"></div>
<div class="a" style="left:1013px;top:675px;width:9px;height:69px;background:#c3c3c3;"></div>
<svg class="a" style="left:615px;top:664px" width="14" height="20" viewBox="0 0 14 20">
<path d="M1 1V16L4.6 12.6L7 18.2L9.3 17.2L7 11.8H12Z" fill="#000" stroke="#fff" stroke-width="1"/>
</svg>
<svg class="a" style="left:0;top:0" width="1022" height="768" viewBox="0 0 1022 768">
<g fill="none" stroke="#ffffff" stroke-width="1.1">
<path d="M12.3 755L15.6 758.3L12.3 761.6M19.6 751L16.4 754.6L19.6 758.3"/>
<circle cx="252.9" cy="756.6" r="5.7"/>
<path d="M250.6 754.3L255.2 758.9M255.2 754.3L250.6 758.9"/>
<path d="M281.1 751.2L287.1 762H275.1Z" stroke-linejoin="round"/>
<path d="M281.1 755V758.4M281.1 759.6V760.6"/>
<path d="M968.3 753.6V751.3H976.8V756.1H974.6L973 757.6"/>
<circle cx="969.3" cy="756.4" r="2.2"/>
<path d="M965.5 762.6C966 759.8 967.6 758.8 969.3 758.8C971 758.8 972.6 759.8 973.1 762.6"/>
<path d="M1001.2 751.3C998.4 751.3 996.9 753.3 996.9 755.8V759.4L996.4 760.3H1006.2L1005.6 759.4V757.2"/>
<path d="M999.6 761.6C1000.2 762.8 1002.2 762.8 1002.8 761.6"/>
</g>
<circle cx="1004.6" cy="753.4" r="2.4" fill="#fff"/>
</svg>
<div class="t" style="left:40.80px;top:746.63px;font-size:12.9px;line-height:19px;color:#ffffff;font-family:'Liberation Sans',sans-serif;">Python 3.9.0 64-bit ('venv': venv)</div>
<div class="t" style="left:263.00px;top:746.63px;font-size:12.9px;line-height:19px;color:#ffffff;font-family:'Liberation Sans',sans-serif;">0</div>
<div class="t" style="left:291.00px;top:746.63px;font-size:12.9px;line-height:19px;color:#ffffff;font-family:'Liberation Sans',sans-serif;">0</div>
<div class="t" style="left:680.00px;top:747.40px;font-size:12.1px;line-height:18px;color:#ffffff;font-family:'Liberation Sans',sans-serif;">Ln 7, Col 1</div>
<div class="t" style="left:752.60px;top:746.63px;font-size:12.9px;line-height:19px;color:#ffffff;font-family:'Liberation Sans',sans-serif;">Spaces: 4</div>
<div class="t" style="left:825.60px;top:746.63px;font-size:12.9px;line-height:19px;color:#ffffff;font-family:'Liberation Sans',sans-serif;">UTF-8</div>
<div class="t" style="left:877.00px;top:746.63px;font-size:12.9px;line-height:19px;color:#ffffff;font-family:'Liberation Sans',sans-serif;">LF</div>
<div class="t" style="left:907.00px;top:746.63px;font-size:12.9px;line-height:19px;color:#ffffff;font-family:'Liberation Sans',sans-serif;">Python</div>
</body></html>
